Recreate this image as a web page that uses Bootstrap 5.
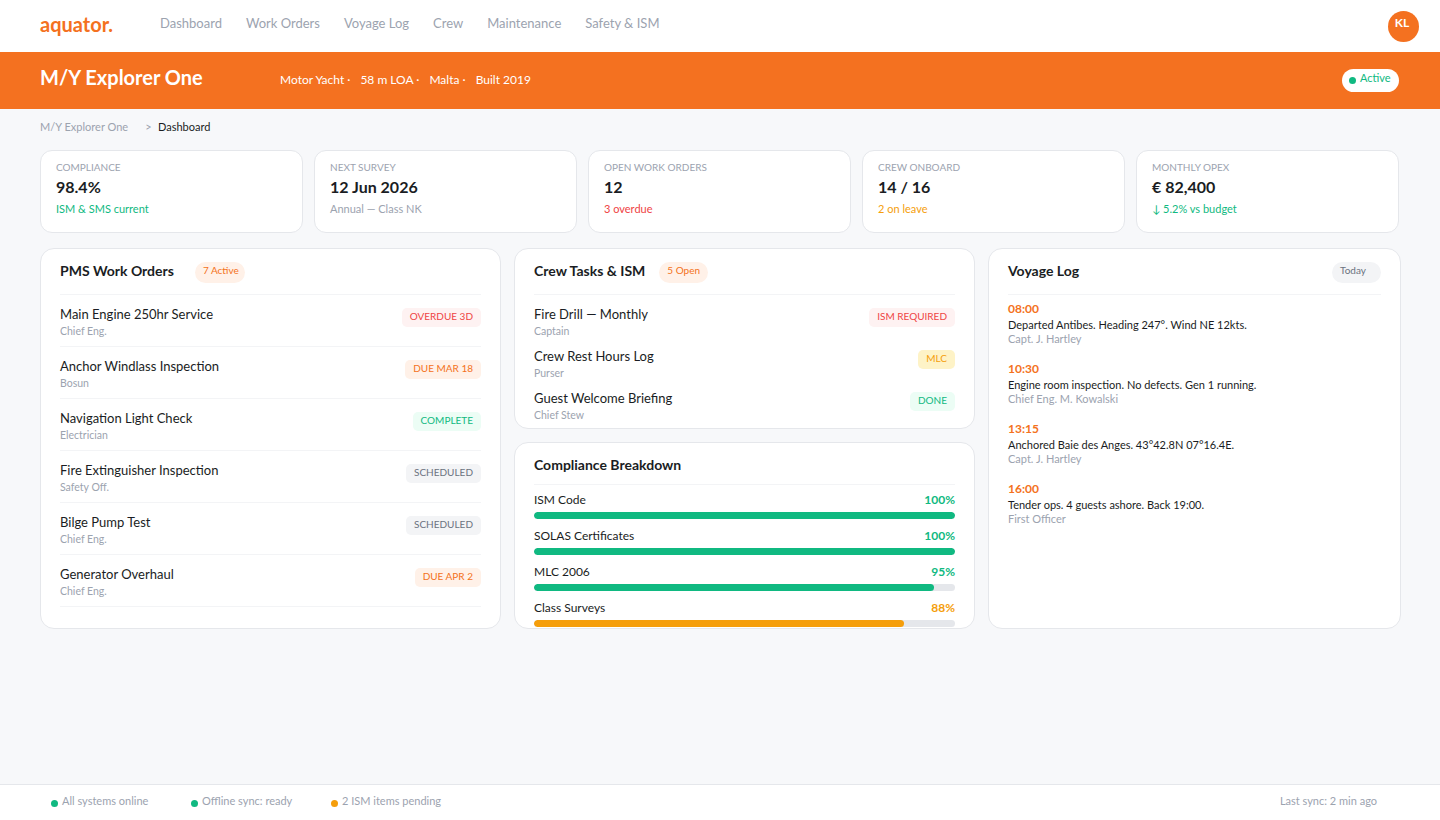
<!DOCTYPE html>
<html lang="en"><head><meta charset="utf-8"><title>Aquator</title>
<link href="https://cdn.jsdelivr.net/npm/bootstrap@5.3.0/dist/css/bootstrap.min.css" rel="stylesheet">
<style>
html,body{height:100%}
body{font-family:Lato,"Open Sans",sans-serif;background:#f7f8fa;color:#1a1d23;height:820px;overflow:hidden;display:flex;flex-direction:column}
.topbar{height:52px;background:#fff;padding:0 21px 0 40px}
.brand-word{font-size:20px;font-weight:700;color:#f47120;width:120px;line-height:48px;height:52px}
.top-link{font-size:13px;color:#9ca3af;text-decoration:none;margin-right:24px;padding-bottom:4px}
.avatar-dot{width:31px;height:31px;border-radius:50%;background:#f47120;color:#fff;font-size:12px;font-weight:700;text-align:center;padding-right:3px;line-height:24px}
.vessel-band{height:57px;background:#f47120;color:#fff;padding:0 41px 0 40px}
.vessel-name{font-size:20px;font-weight:700;width:240px;margin-bottom:7px}
.vessel-meta{font-size:12px;margin-bottom:2px}
.vessel-meta span{margin-right:10px}
.state-pill{background:#fff;color:#10b981;font-size:11px;border-radius:12px;height:23px;width:57px;padding:1px 0 0 7px;line-height:16px}
.dot-mark{display:inline-block;width:7px;height:7px;border-radius:50%;background:#10b981;margin-right:4px;vertical-align:-2px}
.dot-amber{background:#f59e0b}
.crumbs{font-size:11px;color:#9ca3af;padding:0 40px;height:41px;line-height:36px}
.crumbs b{font-weight:400;color:#1a1d23}
.crumbs i{font-style:normal;margin:0 6.5px 0 17px}
.kpi-row{display:grid;grid-template-columns:repeat(5,263px);gap:11px;padding:0 40px;margin-bottom:15px}
.kpi-box{height:83px;background:#fff;border:1px solid #e5e7eb;border-radius:12px;padding:9px 15px}
.kpi-label{font-size:10px;color:#9ca3af;text-transform:uppercase;line-height:14px}
.kpi-value{font-size:16px;font-weight:700;line-height:20px;margin-top:3px}
.kpi-note{font-size:11px;line-height:14px;margin-top:5px}
.tone-green{color:#10b981}.tone-red{color:#ef4444}.tone-amber{color:#f59e0b}.tone-grey{color:#9ca3af}.tone-orange{color:#f47120}
.board{display:grid;grid-template-columns:461px 461px 413px;gap:13px;padding:0 40px;height:381px}
.stack-col{display:flex;flex-direction:column;gap:13px;min-height:0}
.panel-box{background:#fff;border:1px solid #e5e7eb;border-radius:14px;padding:0 19px;overflow:hidden}
.crew-panel{height:181px}
.panel-head{height:46px;border-bottom:1px solid #f3f4f6;padding-top:13px}
.panel-title{font-size:14px;font-weight:700;line-height:18px}
.count-pill{font-size:10px;background:#fff1e8;color:#f47120;border-radius:11px;height:21px;min-width:49px;padding:1px 6px 0 8px;line-height:15px;margin-left:21px}
.pill-near{margin-left:14px}
.today-pill{background:#f3f4f6;color:#6b7280;margin-left:auto}
.work-row{height:52px;border-bottom:1px solid #f3f4f6;padding-top:11px}
.task-row{height:42px;padding-top:11px}
.row-name{font-size:13px;line-height:17px}
.row-who{font-size:10.5px;color:#9ca3af;line-height:14px;margin-top:1px}
.tag-chip{font-size:10px;border-radius:5px;height:19px;padding:0 8px;line-height:17px;text-transform:uppercase;margin-top:2px;flex:none}
.tag-red{background:#fef2f2;color:#ef4444}
.tag-orange{background:#fff1e8;color:#f47120}
.tag-green{background:#ecfdf5;color:#10b981}
.tag-grey{background:#f3f4f6;color:#6b7280}
.tag-amber{background:#fef3c7;color:#f59e0b}
.breakdown-head{height:42px;padding-top:13px}
.meter-row{height:36px;padding-top:7px}
.meter-top{font-size:12px;line-height:16px}
.meter-pct{font-weight:700}
.meter-rail{height:7px;border-radius:4px;background:#e5e7eb;margin-top:4px;overflow:hidden}
.meter-fill{height:100%;border-radius:4px}
.fill-green{background:#10b981}.fill-amber{background:#f59e0b}
.log-entry{height:60px}
.log-list{padding-top:5px}
.log-time{font-size:12px;font-weight:700;color:#f47120;line-height:17px}
.log-text{font-size:11px;line-height:14px;margin-top:1px}
.log-who{font-size:11px;color:#9ca3af;line-height:14px}
.status-foot{margin-top:auto;height:36px;background:#fff;border-top:1px solid #e5e7eb;font-size:11px;color:#9ca3af;padding:0 63px 2px 51px}
.foot-item{width:140px}
</style></head><body>
<nav class="topbar d-flex align-items-center">
<div class="brand-word">aquator.</div>
<a class="top-link" href="#">Dashboard</a><a class="top-link" href="#">Work Orders</a><a class="top-link" href="#">Voyage Log</a><a class="top-link" href="#">Crew</a><a class="top-link" href="#">Maintenance</a><a class="top-link" href="#">Safety &amp; ISM</a>
<div class="avatar-dot ms-auto">KL</div>
</nav>
<header class="vessel-band d-flex align-items-center">
<div class="vessel-name">M/Y Explorer One</div>
<div class="vessel-meta"><span>Motor Yacht ·</span><span>58 m LOA ·</span><span>Malta ·</span><span>Built 2019</span></div>
<div class="state-pill ms-auto"><i class="dot-mark"></i>Active</div>
</header>
<div class="crumbs">M/Y Explorer One<i>&gt;</i><b>Dashboard</b></div>
<section class="kpi-row">
<div class="kpi-box"><div class="kpi-label">Compliance</div><div class="kpi-value">98.4%</div><div class="kpi-note tone-green">ISM &amp; SMS current</div></div>
<div class="kpi-box"><div class="kpi-label">Next Survey</div><div class="kpi-value">12 Jun 2026</div><div class="kpi-note tone-grey">Annual — Class NK</div></div>
<div class="kpi-box"><div class="kpi-label">Open Work Orders</div><div class="kpi-value">12</div><div class="kpi-note tone-red">3 overdue</div></div>
<div class="kpi-box"><div class="kpi-label">Crew Onboard</div><div class="kpi-value">14 / 16</div><div class="kpi-note tone-amber">2 on leave</div></div>
<div class="kpi-box"><div class="kpi-label">Monthly OPEX</div><div class="kpi-value">€ 82,400</div><div class="kpi-note tone-green">↓ 5.2% vs budget</div></div>
</section>
<main class="board">
<div class="panel-box">
<div class="panel-head d-flex align-items-start"><div class="panel-title">PMS Work Orders</div><div class="count-pill">7 Active</div></div>
<div class="work-row d-flex justify-content-between align-items-start"><div><div class="row-name">Main Engine 250hr Service</div><div class="row-who">Chief Eng.</div></div><div class="tag-chip tag-red">Overdue 3D</div></div>
<div class="work-row d-flex justify-content-between align-items-start"><div><div class="row-name">Anchor Windlass Inspection</div><div class="row-who">Bosun</div></div><div class="tag-chip tag-orange">Due Mar 18</div></div>
<div class="work-row d-flex justify-content-between align-items-start"><div><div class="row-name">Navigation Light Check</div><div class="row-who">Electrician</div></div><div class="tag-chip tag-green">Complete</div></div>
<div class="work-row d-flex justify-content-between align-items-start"><div><div class="row-name">Fire Extinguisher Inspection</div><div class="row-who">Safety Off.</div></div><div class="tag-chip tag-grey">Scheduled</div></div>
<div class="work-row d-flex justify-content-between align-items-start"><div><div class="row-name">Bilge Pump Test</div><div class="row-who">Chief Eng.</div></div><div class="tag-chip tag-grey">Scheduled</div></div>
<div class="work-row d-flex justify-content-between align-items-start"><div><div class="row-name">Generator Overhaul</div><div class="row-who">Chief Eng.</div></div><div class="tag-chip tag-orange">Due Apr 2</div></div>
</div>
<div class="stack-col">
<div class="panel-box crew-panel">
<div class="panel-head d-flex align-items-start"><div class="panel-title">Crew Tasks &amp; ISM</div><div class="count-pill pill-near">5 Open</div></div>
<div class="task-row d-flex justify-content-between align-items-start"><div><div class="row-name">Fire Drill — Monthly</div><div class="row-who">Captain</div></div><div class="tag-chip tag-red">ISM Required</div></div>
<div class="task-row d-flex justify-content-between align-items-start"><div><div class="row-name">Crew Rest Hours Log</div><div class="row-who">Purser</div></div><div class="tag-chip tag-amber">MLC</div></div>
<div class="task-row d-flex justify-content-between align-items-start"><div><div class="row-name">Guest Welcome Briefing</div><div class="row-who">Chief Stew</div></div><div class="tag-chip tag-green">Done</div></div>
</div>
<div class="panel-box flex-grow-1">
<div class="breakdown-head panel-head"><div class="panel-title">Compliance Breakdown</div></div>
<div class="meter-row"><div class="meter-top d-flex justify-content-between"><span>ISM Code</span><span class="meter-pct tone-green">100%</span></div><div class="meter-rail"><div class="meter-fill fill-green" style="width:100%"></div></div></div>
<div class="meter-row"><div class="meter-top d-flex justify-content-between"><span>SOLAS Certificates</span><span class="meter-pct tone-green">100%</span></div><div class="meter-rail"><div class="meter-fill fill-green" style="width:100%"></div></div></div>
<div class="meter-row"><div class="meter-top d-flex justify-content-between"><span>MLC 2006</span><span class="meter-pct tone-green">95%</span></div><div class="meter-rail"><div class="meter-fill fill-green" style="width:95%"></div></div></div>
<div class="meter-row"><div class="meter-top d-flex justify-content-between"><span>Class Surveys</span><span class="meter-pct tone-amber">88%</span></div><div class="meter-rail"><div class="meter-fill fill-amber" style="width:88%"></div></div></div>
</div>
</div>
<div class="panel-box">
<div class="panel-head d-flex align-items-start"><div class="panel-title">Voyage Log</div><div class="count-pill today-pill">Today</div></div>
<div class="log-list">
<div class="log-entry"><div class="log-time">08:00</div><div class="log-text">Departed Antibes. Heading 247°. Wind NE 12kts.</div><div class="log-who">Capt. J. Hartley</div></div>
<div class="log-entry"><div class="log-time">10:30</div><div class="log-text">Engine room inspection. No defects. Gen 1 running.</div><div class="log-who">Chief Eng. M. Kowalski</div></div>
<div class="log-entry"><div class="log-time">13:15</div><div class="log-text">Anchored Baie des Anges. 43°42.8N 07°16.4E.</div><div class="log-who">Capt. J. Hartley</div></div>
<div class="log-entry"><div class="log-time">16:00</div><div class="log-text">Tender ops. 4 guests ashore. Back 19:00.</div><div class="log-who">First Officer</div></div>
</div>
</div>
</main>
<footer class="status-foot d-flex align-items-center">
<span class="foot-item"><i class="dot-mark"></i>All systems online</span>
<span class="foot-item"><i class="dot-mark"></i>Offline sync: ready</span>
<span class="foot-item"><i class="dot-mark dot-amber"></i>2 ISM items pending</span>
<span class="ms-auto">Last sync: 2 min ago</span>
</footer>
</body></html>
